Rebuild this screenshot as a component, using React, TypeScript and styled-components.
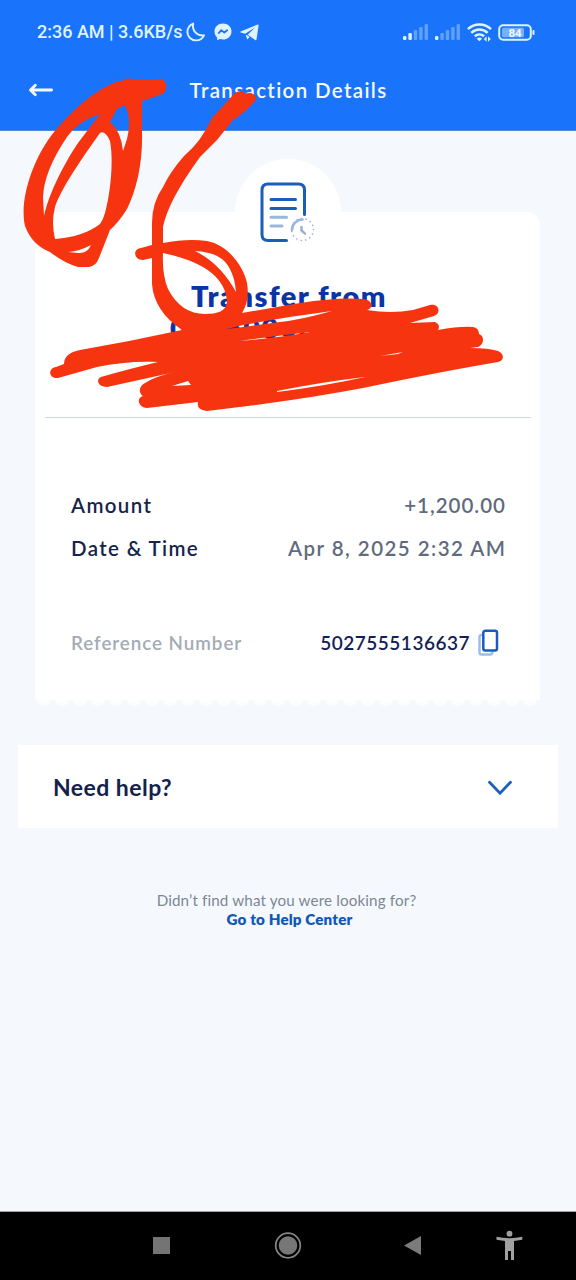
import React from "react";
import styled, { createGlobalStyle } from "styled-components";

const Global = createGlobalStyle`
  *, *::before, *::after { box-sizing: border-box; }
  html, body { margin: 0; padding: 0; background: #f5f9fe; }
  body { font-family: Lato, "Open Sans", sans-serif; }
  h1, h2, p { margin: 0; }
  svg { display: block; flex: none; }
`;

const Screen = styled.div`
  position: relative;
  width: 576px;
  height: 1280px;
  display: flex;
  flex-direction: column;
  background: #f5f9fe;
  overflow: hidden;
`;

const TopBar = styled.header`
  height: 131px;
  background: #1a73fb;
  border-bottom: 1px solid #4a8ae0;
  color: #f4fbff;
`;

const StatusBar = styled.div`
  height: 64px;
  padding: 0 41px 0 37px;
  display: flex;
  align-items: center;
  justify-content: space-between;
  color: #dff3ff;
`;

const StatusGroup = styled.div<{ $gap: number }>`
  display: flex;
  align-items: center;
  gap: ${(p) => p.$gap}px;
`;

const Clock = styled.span`
  font: 500 18px/24px Roboto, sans-serif;
  white-space: nowrap;
`;

const NavBar = styled.div`
  height: 54px;
  padding: 0 29px;
  display: grid;
  grid-template-columns: 40px 1fr 40px;
  align-items: center;
`;

const Title = styled.h1`
  font-size: 20.5px;
  line-height: 28px;
  font-weight: 600;
  letter-spacing: 1.35px;
  padding: 0 0 3px 1px;
  text-align: center;
  white-space: nowrap;
`;

const Receipt = styled.main`
  position: relative;
  width: 505px;
  height: 488px;
  margin: 81px 0 0 35px;
  padding: 0 9px 0 10px;
  background: #fff;
  border-radius: 14px 14px 0 0;
  display: flex;
  flex-direction: column;

  &::after {
    content: "";
    position: absolute;
    left: 0;
    right: 0;
    top: 100%;
    height: 7px;
    opacity: 0.65;
    background: radial-gradient(circle at 9px -1px, #fff 6px, transparent 8px) 0 0 / 18px 7px repeat-x;
  }
`;

const Badge = styled.div`
  width: 106px;
  height: 106px;
  margin: -53px auto 0;
  padding: 2px 1px 0 0;
  border-radius: 50%;
  background: #fff;
  display: flex;
  align-items: center;
  justify-content: center;
`;

const Heading = styled.h2`
  height: 153px;
  padding: 15px 0 0 2px;
  border-bottom: 1px solid #cfd6de;
  color: #0b35a4;
  font-size: 29px;
  line-height: 32px;
  font-weight: 800;
  letter-spacing: 1.5px;
  text-align: center;
  white-space: nowrap;
`;

const Details = styled.div`
  padding: 65px 26px 0 26px;
  display: flex;
  flex-direction: column;
`;

const Row = styled.div<{ $before?: number }>`
  height: 43px;
  margin-top: ${(p) => p.$before ?? 0}px;
  display: flex;
  align-items: center;
  justify-content: space-between;
  white-space: nowrap;
`;

const Label = styled.span<{ $muted?: boolean }>`
  font-size: ${(p) => (p.$muted ? 18.8 : 20.5)}px;
  font-weight: 600;
  letter-spacing: ${(p) => (p.$muted ? 0.95 : 1.35)}px;
  color: ${(p) => (p.$muted ? "#a3abb6" : "#16244a")};
`;

const Value = styled.span<{ $tracking: number }>`
  font-size: 20.5px;
  font-weight: 600;
  letter-spacing: ${(p) => p.$tracking}px;
  margin-right: -${(p) => p.$tracking}px;
  color: #5f6b7e;
`;

const Reference = styled.span`
  display: flex;
  align-items: center;
  gap: 8px;
  margin-right: 6px;
  font-size: 19px;
  font-weight: 600;
  letter-spacing: 0.5px;
  color: #141f57;
`;

const HelpPanel = styled.section`
  width: 540px;
  height: 83px;
  margin: 45px 0 0 18px;
  padding: 0 45px 0 35px;
  background: #fff;
  display: flex;
  align-items: center;
  justify-content: space-between;
  color: #13224a;
  font-size: 23px;
  font-weight: 700;
  letter-spacing: 0.45px;
`;

const Footer = styled.footer`
  margin-top: 63px;
  padding-right: 3px;
  flex: 1;
  text-align: center;
  font-size: 15.2px;
  line-height: 19px;
  letter-spacing: 0.14px;
  color: #7c8794;
`;

const HelpLink = styled.p`
  padding-left: 6px;
  color: #1259b5;
  font-weight: 800;
`;

const SystemNav = styled.nav`
  height: 69px;
  background: #000;
  border-top: 1px solid #9aa0a5;
`;

const Scribble = styled.svg`
  position: absolute;
  left: 0;
  top: 0;
  pointer-events: none;
`;

const Signal = ({ strong }: { strong: number }) => (
  <svg width="26" height="18" viewBox="0 0 26 18">
    {[4, 7, 10, 13, 16].map((h, i) => (
      <rect key={h} x={-0.8 + i * 5.4 + 0.8} y={17 - h} width="3.4" height={h} rx="1.2" fill="#dff3ff" opacity={i < strong ? 1 : 0.36} />
    ))}
  </svg>
);

const Moon = () => (
  <svg width="20" height="20" viewBox="0 0 20 20" fill="none" stroke="currentColor" strokeWidth="1.9" strokeLinejoin="round">
    <path d="M7.2 1.6C5.8 7.8 10.2 14 18 13.3C16.2 17 12.800 18.600 9.500 18.400C4.900 18.100 1.400 14.500 1.400 10.100C1.400 6.200 3.600 3.100 7.200 1.600Z" />
  </svg>
);

const Messenger = () => (
  <svg width="18" height="18" viewBox="0 0 18 18">
    <path d="M9 .5C4.200.5.500 4 .500 8.500C.500 10.900 1.500 13 3.100 14.500L3.200 17.300L6 16.100C7 16.400 8 16.600 9 16.600C13.800 16.600 17.500 13.100 17.500 8.500C17.500 4 13.800.5 9 .5Z" fill="currentColor" />
    <path d="M4.300 10.600L7.300 7.100L10.300 9.600L13.700 6.700" fill="none" stroke="#1a73fb" strokeWidth="1.8" strokeLinejoin="round" />
  </svg>
);

const Telegram = () => (
  <svg width="19" height="17" viewBox="0 0 19 17">
    <path d="M17.800.5L.6 7.400C.1 7.700.1 8.200.7 8.400L5.200 9.700L15 3.500L7.700 10.700L15.200 16C15.800 16.400 16.300 16.200 16.500 15.400L18.600 1.400C18.700.6 18.400.3 17.800.5Z" fill="currentColor" />
    <path d="M5.600 10.800L7.300 15.400L9.600 13.100L7.200 11.200Z" fill="currentColor" />
  </svg>
);

const Wifi = () => (
  <svg width="25" height="19" viewBox="0 0 25 19" fill="none" stroke="currentColor" strokeWidth="2.5">
    <path d="M.9 6.200C7.400-.1 17.500-.1 24 6.200" />
    <path d="M4.300 9.900C9 5.500 15.900 5.500 20.600 9.900" />
    <path d="M7.800 13.300C10.500 11 14.400 11 17.100 13.300" />
    <path d="M9.700 15.700Q12.400 13.500 15.100 15.700L12.400 18.200Z" fill="currentColor" stroke="none" />
    <path d="M19.600 13.300V18.700L16.800 15.900ZM21 13.300V18.700L23.800 16Z" fill="currentColor" stroke="none" />
  </svg>
);

const Battery = () => (
  <svg width="37" height="17" viewBox="0 0 37 17">
    <rect x="1.200" y="1.200" width="31.600" height="14.600" rx="4" fill="none" stroke="#dff3ff" strokeWidth="2" />
    <rect x="4" y="3.800" width="22" height="9.400" rx="1.500" fill="#76b0fd" />
    <rect x="34.500" y="6" width="2" height="5" rx="1" fill="#dff3ff" />
    <text x="17" y="12.700" textAnchor="middle" fontFamily="Roboto, sans-serif" fontSize="11.500" fontWeight="700" fill="#f4fbff">84</text>
  </svg>
);

const BackArrow = () => (
  <svg width="25" height="16" viewBox="0 0 25 16" fill="none" stroke="currentColor" strokeWidth="2.800" strokeLinecap="round" strokeLinejoin="round">
    <path d="M1.800 7H22.600M6.300 2.200L1.500 7L6.300 11.800" />
  </svg>
);

const ReceiptIcon = () => (
  <svg width="56" height="62" viewBox="0 0 56 62" fill="none" strokeLinecap="round">
    <path d="M44.500 32.500V8Q44.500 2 38.500 2H8Q2 2 2 8V52.500Q2 58.500 8 58.500H26.500" stroke="#1b5dbb" strokeWidth="3" />
    <path d="M11 17.500H35.500M11 26.500H35.500" stroke="#1b5dbb" strokeWidth="3" />
    <path d="M11 35.200H26.500M11 44H22" stroke="#9ab6dd" strokeWidth="3" />
    <circle cx="42.500" cy="47.500" r="11" stroke="#9aafdc" strokeWidth="1.600" strokeDasharray=".1 4.500" />
    <path d="M32 48A10.500 10.500 0 0 1 42.500 37.500" stroke="#9ab6e4" strokeWidth="2.600" />
    <path d="M41.500 45V48.500L45 51.700" stroke="#9aafd2" strokeWidth="2.500" />
  </svg>
);

const CopyIcon = () => (
  <svg width="21" height="28" viewBox="0 0 21 28" fill="none" strokeWidth="2.500">
    <path d="M4 6H3.500Q1.500 6 1.500 8V23.500Q1.500 25.500 3.500 25.500H12Q14.500 25.500 14.500 22.500" stroke="#9fbdea" />
    <rect x="5.300" y="1.700" width="13.700" height="19.800" rx="2" stroke="#175cc3" />
  </svg>
);

const Chevron = () => (
  <svg width="26" height="16" viewBox="0 0 26 16" fill="none" stroke="#1c5fbd" strokeWidth="2.800" strokeLinecap="round">
    <path d="M2.500 3.200L13 14.200L23.500 3.200" />
  </svg>
);

const scribblePath = [
  // zero: outer contour followed by its openings
  "M125 80C127 78 131 78 133 80L160 79C168 80 169 92 160 95C154 97 148 99 142 101V132C143 160 137 190 127 209Q119 222 110 230L99 258Q96 266 89 267H78Q64 263 50 252Q32 245 25 226C19 200 33 158 54 132Q86 94 116 82Z",
  "M100 114Q78 121 67 137Q44 171 43 197L44 216C49 192 67 159 78 143Z",
  "M100 133Q105 130 110 141C114 162 110 195 105 213Q103 220 100 224Q83 237 55 239Q51 222 55 207C61 189 80 161 100 133Z",
  "M117 109L125 105Q132 119 127 139L123 151Q121 131 110 122Z",
  "M68 252Q80 251 91 245Q87 254 78 253Z",
  // six and the strike-through strokes
  "M234 94C239 90 244 91 245 94C251 91 259 96 255 101Q246 112 233 120L217 140L200 157Q168 201 163 227V243Q188 238 207 241C229 245 244 268 247 283Q250 301 242 313L300 303Q338 297 363 299C373 300 374 308 367 310Q391 314 413 310L430 305C440 303 441 314 434 316L410 323L435 322Q441 325 438 330Q460 326 473 327Q479 328 479 334C485 336 484 345 478 347L470 348Q489 348 498 351C505 354 504 361 498 362Q439 372 363 388Q315 397 263 404L207 411Q196 410 198 402L147 408C138 407 136 398 143 396C138 393 139 386 145 383Q156 376 175 372L148 378L107 387C97 387 96 379 101 377Q125 370 158 362C137 361 116 363 97 367L58 378C48 379 48 368 56 367L64 364Q64 353 80 350Q132 341 182 330Q154 311 152 284V258L143 260C134 260 132 249 141 248L152 245V227Q151 204 163 187Q170 172 184 156Q201 142 212 118Z",
  "M163 253Q162 275 168 289Q181 314 205 314C218 314 226 311 227 302Q225 266 163 253Z",
  "M195 251Q213 252 222 259Q234 269 236 292Q220 263 195 251Z",
  "M172 386L188 381L191 385Z",
  "M227 329L243 325Q286 317 332 311Q300 320 280 322Q252 326 227 329Z",
  "M240 341Q274 336 311 332Q279 337.500 240 341Z",
  "M277 391Q322 382 365 377Q325 386 277 392Z",
  "M380 356L403 352L398 354Z",
].join("");

export default function App() {
  return (
    <>
      <Global />
      <Screen>
        <TopBar>
          <StatusBar>
            <StatusGroup $gap={3}>
              <Clock>2:36 AM | 3.6KB/s</Clock>
              <StatusGroup $gap={8}>
                <Moon />
                <Messenger />
                <Telegram />
              </StatusGroup>
            </StatusGroup>
            <StatusGroup $gap={6}>
              <Signal strong={2} />
              <Signal strong={1} />
              <Wifi />
              <Battery />
            </StatusGroup>
          </StatusBar>
          <NavBar>
            <BackArrow />
            <Title>Transaction Details</Title>
          </NavBar>
        </TopBar>

        <Receipt>
          <Badge>
            <ReceiptIcon />
          </Badge>
          <Heading>
            Transfer from
            <br />
            0•••00•0•••••
          </Heading>
          <Details>
            <Row>
              <Label>Amount</Label>
              <Value $tracking={1}>+1,200.00</Value>
            </Row>
            <Row>
              <Label>Date &amp; Time</Label>
              <Value $tracking={1.45}>Apr 8, 2025 2:32 AM</Value>
            </Row>
            <Row $before={52}>
              <Label $muted>Reference Number</Label>
              <Reference>
                5027555136637
                <CopyIcon />
              </Reference>
            </Row>
          </Details>
        </Receipt>

        <HelpPanel>
          Need help?
          <Chevron />
        </HelpPanel>

        <Footer>
          <p>Didn’t find what you were looking for?</p>
          <HelpLink>Go to Help Center</HelpLink>
        </Footer>

        <SystemNav>
          <svg width="576" height="68" viewBox="0 0 576 68">
            <rect x="153" y="25" width="17" height="17" fill="#747474" />
            <circle cx="288" cy="33.500" r="12.300" fill="none" stroke="#858585" strokeWidth="1.700" />
            <circle cx="288" cy="33.500" r="9.300" fill="#777" />
            <path d="M404 33.500L421 24V43Z" fill="#7b7b7b" />
            <g fill="#a0a0a0">
              <circle cx="509.500" cy="21.700" r="2.900" />
              <path d="M496.500 24.800Q509.500 27.500 522.300 24.800V27.800L514 29V48H511V39H508V48H505V29L496.500 27.800Z" />
            </g>
          </svg>
        </SystemNav>

        <Scribble width="576" height="430" viewBox="0 0 576 430">
          <path d={scribblePath} fill="#f63410" fillRule="evenodd" />
        </Scribble>
      </Screen>
    </>
  );
}
